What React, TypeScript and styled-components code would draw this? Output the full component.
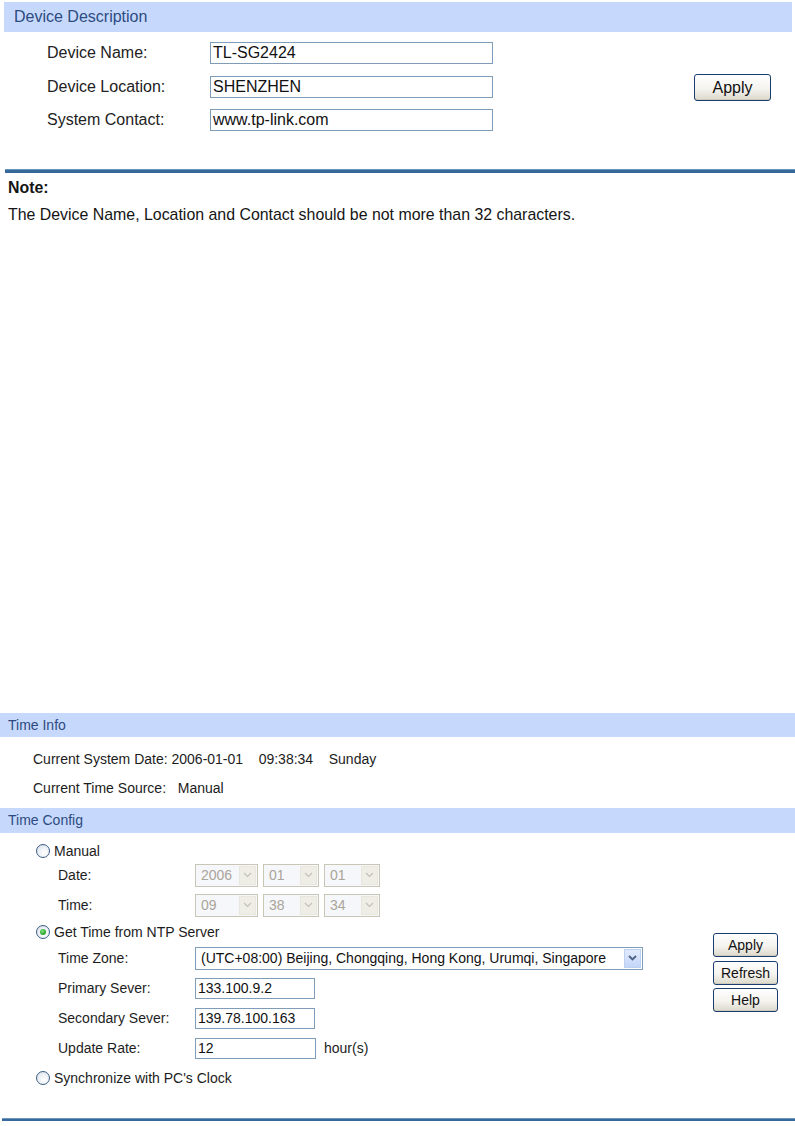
import { FC } from 'react';
import styled, { createGlobalStyle } from 'styled-components';

const GlobalStyle = createGlobalStyle`
    html, body {
        margin: 0;
        padding: 0;
        background: #ffffff;
    }
    body {
        font-family: "Liberation Sans", Arial, sans-serif;
        color: #1c1c1c;
    }
`

const Page = styled.div`
    width: 795px;
    height: 1126px;
    display: flex;
    flex-direction: column;
    overflow: hidden;
`

/* ---------- device description ---------- */

const BigHeader = styled.div`
    margin: 2px 3px 0 4px;
    height: 30px;
    line-height: 30px;
    padding-left: 10px;
    background: #c6d9fd;
    color: #2d4b80;
    font-size: 16px;
`

const DescGrid = styled.div`
    display: grid;
    grid-template-columns: 163px 283px auto;
    grid-template-rows: repeat(3, 22px);
    row-gap: 11.5px;
    align-items: center;
    padding-left: 47px;
    margin-top: 10px;
`

const BigLabel = styled.label`
    font-size: 16px;
    color: #222;
`

const TextBox = styled.div<{ $w?: number; $h?: number; $size?: number }>`
    box-sizing: border-box;
    width: ${p => p.$w ?? 283}px;
    height: ${p => p.$h ?? 22}px;
    border: 1px solid #7f9db9;
    background: #fff;
    padding-left: 2px;
    font-size: ${p => p.$size ?? 16}px;
    line-height: ${p => (p.$h ?? 22) - 2}px;
    color: #111;
    white-space: nowrap;
    overflow: hidden;
`

const XpButton = styled.button<{ $w: number; $h: number; $size: number }>`
    box-sizing: border-box;
    width: ${p => p.$w}px;
    height: ${p => p.$h}px;
    border: 1px solid #1b3c6e;
    border-radius: 3px;
    background: linear-gradient(#ffffff 0%, #f4f3ee 55%, #dcd9cc 100%);
    box-shadow: inset 0 -1px 0 #cfcabb, inset 0 1px 0 #fff;
    font-family: "Liberation Sans", Arial, sans-serif;
    font-size: ${p => p.$size}px;
    color: #111;
    padding: 0;
    cursor: pointer;
`

const ApplyCell = styled.div`
    grid-column: 3;
    grid-row: 2;
    margin-left: 201px;
    margin-top: 2px;
`

const Rule = styled.div<{ $h: number; $left: number }>`
    margin-left: ${p => p.$left}px;
    height: ${p => p.$h}px;
    background: #36699b;
    border-top: 1px solid #6d94bb;
    box-sizing: border-box;
`

const NoteBlock = styled.div`
    padding-left: 8px;
    margin-top: 5px;
    font-size: 15.9px;
    line-height: 20px;
    color: #151515;
    height: 55px;
`

const NoteTitle = styled.div`
    font-weight: bold;
    margin-bottom: 7px;
`

const Gap = styled.div<{ $h: number }>`
    height: ${p => p.$h}px;
    flex-shrink: 0;
`

/* ---------- time settings ---------- */

const SmallHeader = styled.div<{ $h: number }>`
    height: ${p => p.$h}px;
    line-height: ${p => p.$h}px;
    padding-left: 8px;
    background: #c6d9fd;
    color: #2d4b80;
    font-size: 14px;
`

const InfoBox = styled.div`
    padding: 13px 0 11px 33px;
    display: flex;
    flex-direction: column;
    gap: 11px;
    font-size: 14px;
`

const InfoRow = styled.div`
    height: 18px;
    line-height: 18px;
    display: flex;
    white-space: pre;
`

const ConfigArea = styled.div`
    display: flex;
    font-size: 14px;
`

const ConfigMain = styled.div`
    flex: 1;
    padding: 9px 0 0 36px;
`

const RadioRow = styled.div<{ $top: number }>`
    display: flex;
    align-items: center;
    height: 18px;
    margin-top: ${p => p.$top}px;
    gap: 4px;
`

const RadioDot = styled.span<{ $on?: boolean }>`
    position: relative;
    box-sizing: border-box;
    width: 14px;
    height: 14px;
    border-radius: 50%;
    border: 1px solid #3a5d86;
    background: radial-gradient(circle at 60% 65%, #ffffff 0%, #e9edf2 60%, #c8d0da 100%);
    &::after {
        content: '';
        display: ${p => (p.$on ? 'block' : 'none')};
        position: absolute;
        left: 3px;
        top: 3px;
        width: 6px;
        height: 6px;
        border-radius: 50%;
        background: radial-gradient(circle at 40% 35%, #7fe07f 0%, #21a121 70%, #117a11 100%);
    }
`

const SubGrid = styled.div<{ $top: number; $pitch: number }>`
    display: grid;
    grid-template-columns: 137px auto;
    grid-auto-rows: ${p => p.$pitch}px;
    align-items: center;
    padding-left: 22px;
    margin-top: ${p => p.$top}px;
`

const SubLabel = styled.span`
    color: #1e1e1e;
`

const ControlLine = styled.div`
    display: flex;
    align-items: center;
    gap: 5px;
`

const SelectBox = styled.div<{ $w: number; $disabled?: boolean }>`
    box-sizing: border-box;
    width: ${p => p.$w}px;
    height: 23px;
    display: flex;
    align-items: center;
    border: 1px solid ${p => (p.$disabled ? '#cac6b6' : '#7f9db9')};
    background: ${p => (p.$disabled ? '#f6f7fb' : '#fff')};
    padding: 1px;
`

const SelectText = styled.span<{ $disabled?: boolean }>`
    flex: 1;
    padding-left: 4px;
    color: ${p => (p.$disabled ? '#aaa59a' : '#111')};
    white-space: nowrap;
    overflow: hidden;
`

const SelectArrow = styled.span<{ $disabled?: boolean }>`
    width: 17px;
    height: 19px;
    display: flex;
    align-items: center;
    justify-content: center;
    box-sizing: border-box;
    border: 1px solid ${p => (p.$disabled ? '#e8e6dd' : '#bcd0f2')};
    background: ${p => (p.$disabled ? '#eeede6' : 'linear-gradient(#e2ebfd, #c3d5f8)')};
`

const HourUnit = styled.span`
    margin-left: 3px;
`

const ButtonColumn = styled.div`
    width: 82px;
    padding-top: 100px;
    display: flex;
    flex-direction: column;
    gap: 3.5px;
`

const Chevron: FC<{ disabled?: boolean }> = ({ disabled }) => (
    <svg width="9" height="6" viewBox="0 0 9 6">
        <path
            d="M1 1 L4.5 4.5 L8 1"
            fill="none"
            stroke={disabled ? '#c3c1b8' : '#4d6185'}
            strokeWidth={disabled ? 1.2 : 1.8}
        />
    </svg>
)

const Select: FC<{ value: string; width: number; disabled?: boolean }> = ({ value, width, disabled }) => (
    <SelectBox $w={width} $disabled={disabled}>
        <SelectText $disabled={disabled}>{value}</SelectText>
        <SelectArrow $disabled={disabled}>
            <Chevron disabled={disabled} />
        </SelectArrow>
    </SelectBox>
)

const App: FC = () => {
    return (
        <Page>
            <GlobalStyle />
            <BigHeader>Device Description</BigHeader>
            <DescGrid>
                <BigLabel>Device Name:</BigLabel>
                <TextBox>TL-SG2424</TextBox>
                <span />
                <BigLabel>Device Location:</BigLabel>
                <TextBox>SHENZHEN</TextBox>
                <ApplyCell>
                    <XpButton $w={77} $h={27} $size={16}>Apply</XpButton>
                </ApplyCell>
                <BigLabel>System Contact:</BigLabel>
                <TextBox>www.tp-link.com</TextBox>
            </DescGrid>
            <Gap $h={38} />
            <Rule $h={4} $left={5} />
            <NoteBlock>
                <NoteTitle>Note:</NoteTitle>
                The Device Name, Location and Contact should be not more than 32 characters.
            </NoteBlock>
            <Gap $h={480} />

            <SmallHeader $h={24}>Time Info</SmallHeader>
            <InfoBox>
                <InfoRow>Current System Date: 2006-01-01    09:38:34    Sunday</InfoRow>
                <InfoRow>Current Time Source:   Manual</InfoRow>
            </InfoBox>
            <SmallHeader $h={25}>Time Config</SmallHeader>
            <ConfigArea>
                <ConfigMain>
                    <RadioRow $top={0}>
                        <RadioDot />
                        <span>Manual</span>
                    </RadioRow>
                    <SubGrid $top={0} $pitch={30}>
                        <SubLabel>Date:</SubLabel>
                        <ControlLine>
                            <Select value="2006" width={63} disabled />
                            <Select value="01" width={56} disabled />
                            <Select value="01" width={56} disabled />
                        </ControlLine>
                        <SubLabel>Time:</SubLabel>
                        <ControlLine>
                            <Select value="09" width={63} disabled />
                            <Select value="38" width={56} disabled />
                            <Select value="34" width={56} disabled />
                        </ControlLine>
                    </SubGrid>
                    <RadioRow $top={3}>
                        <RadioDot $on />
                        <span>Get Time from NTP Server</span>
                    </RadioRow>
                    <SubGrid $top={2} $pitch={30}>
                        <SubLabel>Time Zone:</SubLabel>
                        <Select value="(UTC+08:00) Beijing, Chongqing, Hong Kong, Urumqi, Singapore" width={448} />
                        <SubLabel>Primary Sever:</SubLabel>
                        <TextBox $w={120} $h={21} $size={14}>133.100.9.2</TextBox>
                        <SubLabel>Secondary Sever:</SubLabel>
                        <TextBox $w={120} $h={21} $size={14}>139.78.100.163</TextBox>
                        <SubLabel>Update Rate:</SubLabel>
                        <ControlLine>
                            <TextBox $w={121} $h={21} $size={14}>12</TextBox>
                            <HourUnit>hour(s)</HourUnit>
                        </ControlLine>
                    </SubGrid>
                    <RadioRow $top={6}>
                        <RadioDot />
                        <span>Synchronize with PC's Clock</span>
                    </RadioRow>
                </ConfigMain>
                <ButtonColumn>
                    <XpButton $w={65} $h={24} $size={14}>Apply</XpButton>
                    <XpButton $w={65} $h={24} $size={14}>Refresh</XpButton>
                    <XpButton $w={65} $h={24} $size={14}>Help</XpButton>
                </ButtonColumn>
            </ConfigArea>
            <Gap $h={31} />
            <Rule $h={3} $left={2} />
        </Page>
    )
}

export default App
